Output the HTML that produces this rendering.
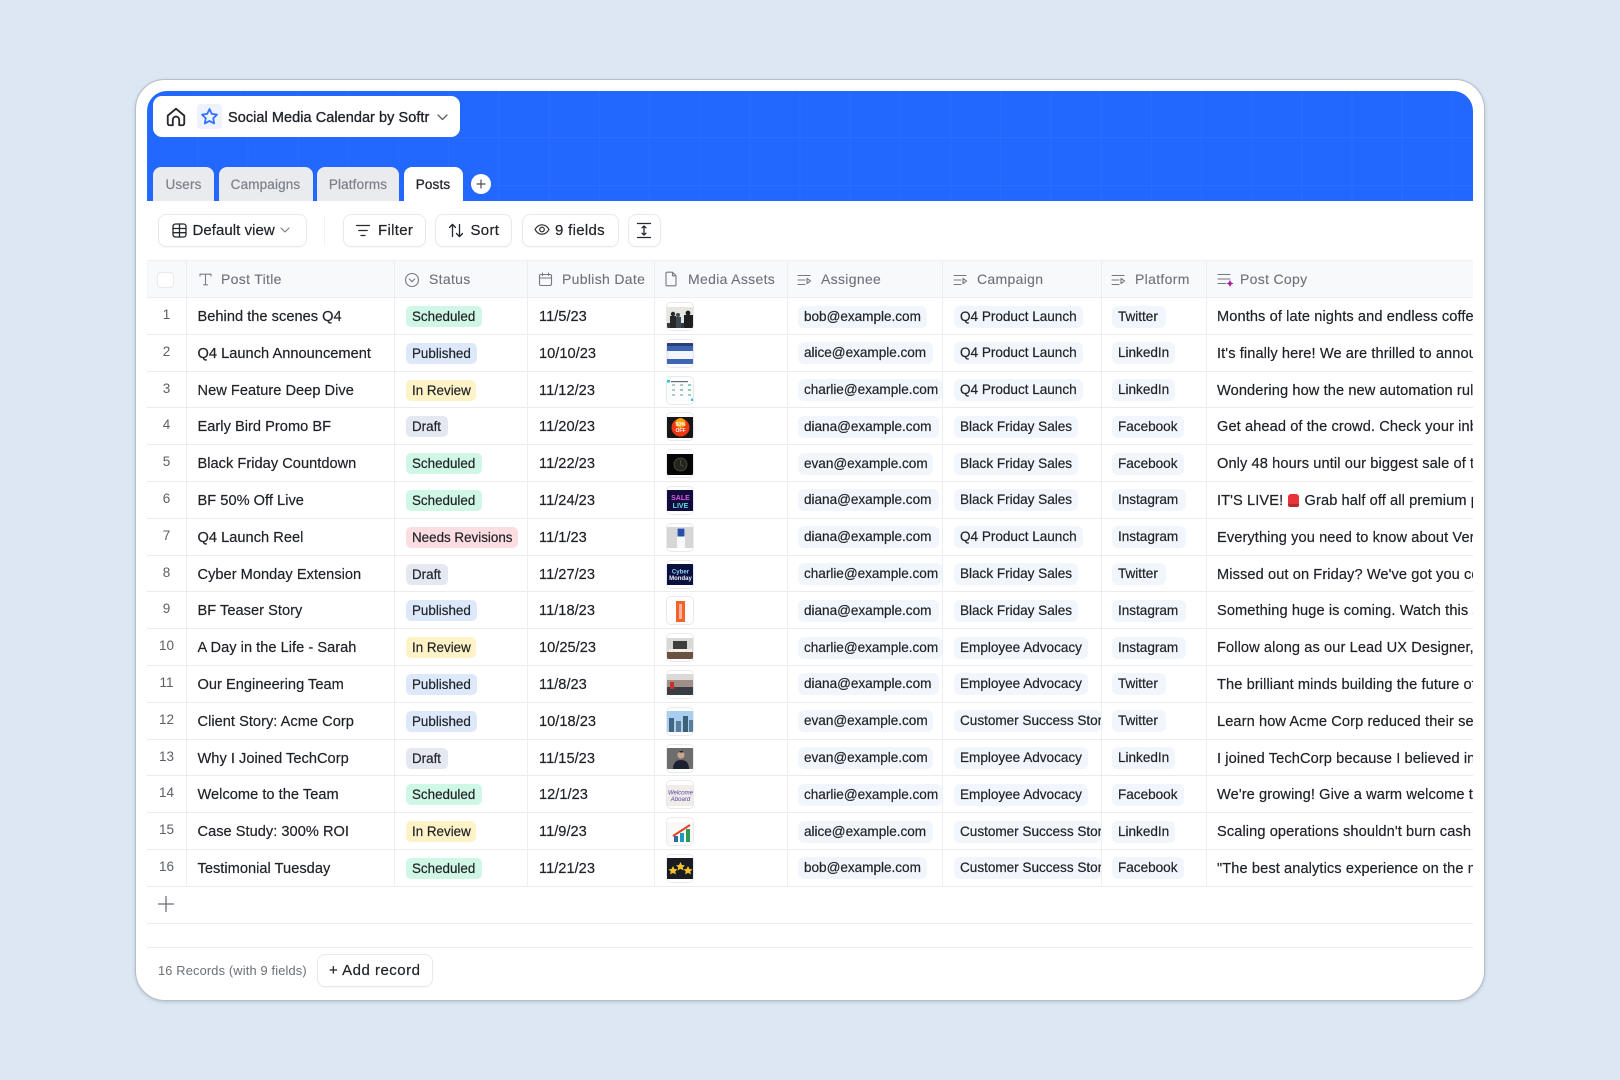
<!DOCTYPE html>
<html lang="en"><head><meta charset="utf-8"><title>Social Media Calendar by Softr</title>
<style>
*{box-sizing:border-box;margin:0;padding:0}
html,body{width:1620px;height:1080px;overflow:hidden;background:#dce7f3;font-family:"Liberation Sans",sans-serif;color:#1f2227;-webkit-text-stroke:.2px}
.card{position:absolute;left:135px;top:79px;width:1350px;height:922px;background:#fff;border:1px solid #b9bfc7;border-radius:30px;box-shadow:0 1px 3px rgba(60,80,110,.25)}
.blue{position:absolute;left:147px;top:91px;width:1326px;height:110px;border-radius:20px 20px 0 0;background-color:#2268ff;background-image:linear-gradient(90deg,rgba(255,255,255,.03) 1px,transparent 1px),linear-gradient(180deg,rgba(255,255,255,.03) 1px,transparent 1px);background-size:50.2px 48px;background-position:0 46px}
.pillhead{position:absolute;left:153px;top:96px;width:307px;height:41px;background:#fff;border-radius:9px}
.title{position:absolute;left:228px;top:109px;font-size:14.5px;line-height:18px;letter-spacing:.05px;white-space:nowrap;-webkit-text-stroke:.35px}
.starbox{position:absolute;left:197px;top:104px;width:25px;height:25px;background:#edf2fe;border-radius:4px}
.tab{position:absolute;top:167px;height:34px;background:#e9ebef;border-radius:8px 8px 0 0;color:#7c8088;font-size:13.5px;line-height:36px;text-align:center;letter-spacing:.15px}
.tab.on{background:#fff;color:#25282d;-webkit-text-stroke:.3px}
.plus{position:absolute;left:471px;top:174px;width:20px;height:20px;background:#fff;border-radius:50%}
.btn{position:absolute;top:214px;height:33px;background:#fff;border:1px solid #e7e9ed;border-radius:8px;box-shadow:0 1px 1px rgba(30,40,60,.04)}
.tt{position:absolute;font-size:15px;line-height:20px;white-space:nowrap;letter-spacing:.3px}
.head{position:absolute;left:147px;top:260px;width:1326px;height:38px;background:#f8f9fb;border-top:1px solid #eff0f2;border-bottom:1px solid #edeef1}
.h{position:absolute;top:270px;font-size:14px;line-height:18px;color:#6c7078;white-space:nowrap;letter-spacing:.32px;-webkit-text-stroke:.1px}
.vl{position:absolute;top:260px;height:627px;width:1px;background:#eceef1}
.check{position:absolute;left:157px;top:272px;width:17px;height:16px;border:1px solid #e6e8eb;border-radius:4px;background:#fff}
.rows{position:absolute;left:147px;top:298px;width:1326px}
.r{position:relative;height:36.8px;border-bottom:1px solid #e9ebee;font-size:14.6px;line-height:38px;white-space:nowrap;letter-spacing:.03px}
.r>*{position:absolute;top:0}
.n{left:0;width:39px;text-align:center;color:#5b5f66;font-size:13.5px;top:-1px!important;line-height:36px;-webkit-text-stroke:0;letter-spacing:0}
.t{left:50.500px}.d{left:392px}
.x{left:1070px;width:256px;overflow:hidden;letter-spacing:.1px}
.s{left:259px;top:8px!important;height:21px;line-height:21px;border-radius:5px;padding-left:6px;font-size:13.4px;letter-spacing:0}
.sch{background:#d0f7e6;width:76px}.pub{background:#dde9fa;width:71px}.rev{background:#fdf3c7;width:70px}.dra{background:#e4e8f1;width:42px}.nee{background:#fcdde1;width:112px}
.chip{top:7.500px!important;height:22px;line-height:22px;background:#f1f5fc;border-radius:6px;padding-left:6px;overflow:hidden;font-size:13.6px;letter-spacing:-.03px}
.a{left:651px}.c{left:807px}.p{left:965px}
.th{left:518.7px;top:4px!important;width:28.5px;height:29px;border:1px solid #e8e9ec;border-radius:5px;background:#fff;overflow:hidden}
.th svg{position:absolute;left:.5px;top:3.5px;width:27px;height:21px;display:block;filter:blur(.35px)}
.siren{display:inline-block;width:11px;height:13px;background:#e8333a;border-radius:3px 3px 2px 2px;vertical-align:-2px;margin:0 1px;border-bottom:3px solid #b9282d}
.hl{position:absolute;left:147px;width:1326px;height:1px;background:#e9ebee}
.foot{position:absolute;left:158px;top:962px;font-size:12.8px;line-height:18px;color:#70747b;letter-spacing:.17px;-webkit-text-stroke:.05px;white-space:nowrap}
svg.i{position:absolute;fill:none;stroke-linecap:round;stroke-linejoin:round}
</style></head><body>
<div class="card"></div>
<div class="blue"></div>
<div class="pillhead"></div>
<svg class="i" style="left:165px;top:106px" width="22" height="22" viewBox="0 0 24 24" stroke="#25282d" stroke-width="2"><path d="M3 10.500 12 3l9 7.500V19a2 2 0 0 1-2 2h-3.500v-6a3.500 3.500 0 0 0-7 0v6H5a2 2 0 0 1-2-2z"/></svg>
<div class="starbox"></div>
<svg class="i" style="left:200px;top:107px" width="19" height="19" viewBox="0 0 24 24" stroke="#2f6fff" stroke-width="2.200"><path d="M12 2.500l2.900 6.200 6.600.9-4.800 4.600 1.200 6.600L12 17.600 6.100 20.800l1.200-6.600L2.500 9.600l6.600-.9z"/></svg>
<div class="title">Social Media Calendar by Softr</div>
<svg class="i" style="left:436px;top:111px" width="13" height="12" viewBox="0 0 13 12" stroke="#5c6068" stroke-width="1.300"><path d="M2 4l4.500 4.500L11 4"/></svg>

<div class="tab" style="left:153px;width:61px">Users</div>
<div class="tab" style="left:218.500px;width:94px">Campaigns</div>
<div class="tab" style="left:317px;width:82px">Platforms</div>
<div class="tab on" style="left:403.500px;width:59px">Posts</div>
<div class="plus"></div>
<svg class="i" style="left:476px;top:179px" width="10" height="10" viewBox="0 0 10 10" stroke="#4a4e55" stroke-width="1.200"><path d="M5 1v8M1 5h8"/></svg>

<div class="btn" style="left:158px;width:149px"></div>
<svg class="i" style="left:172px;top:223px" width="15" height="15" viewBox="0 0 15 15" stroke="#25282d" stroke-width="1.300"><rect x="1" y="1" width="13" height="13" rx="2.500"/><path d="M1 5.500h13M1 9.700h13M7.500 1v13"/></svg>
<div class="tt" style="left:192.500px;top:221px;letter-spacing:.05px">Default view</div>
<svg class="i" style="left:279px;top:224px" width="12" height="12" viewBox="0 0 12 12" stroke="#777b82" stroke-width="1.100"><path d="M2 4l4 4 4-4"/></svg>
<div style="position:absolute;left:324px;top:216px;width:1px;height:29px;background:#f0f1f3"></div>

<div class="btn" style="left:342.500px;width:83px"></div>
<svg class="i" style="left:355px;top:223px" width="16" height="15" viewBox="0 0 16 15" stroke="#25282d" stroke-width="1.300"><path d="M1.500 2.500h13M3.800 7.500h8.400M6 12.500h4"/></svg>
<div class="tt" style="left:378px;top:221px">Filter</div>

<div class="btn" style="left:435px;width:77px"></div>
<svg class="i" style="left:448px;top:222px" width="16" height="17" viewBox="0 0 16 17" stroke="#25282d" stroke-width="1.300"><path d="M4.500 14.500v-12M1.500 5.500l3-3.200 3 3.200M11.500 2.500v12M8.500 11.500l3 3.200 3-3.200"/></svg>
<div class="tt" style="left:470.500px;top:221px">Sort</div>

<div class="btn" style="left:521.500px;width:97px"></div>
<svg class="i" style="left:534px;top:222px" width="16" height="15" viewBox="0 0 16 15" stroke="#25282d" stroke-width="1.200"><path d="M1 7.500C2.800 4.300 5.200 2.800 8 2.800s5.200 1.500 7 4.700c-1.800 3.200-4.200 4.700-7 4.700S2.800 10.700 1 7.500z"/><circle cx="8" cy="7.500" r="2.300"/></svg>
<div class="tt" style="left:555px;top:221px">9 fields</div>

<div class="btn" style="left:628px;width:32.500px"></div>
<svg class="i" style="left:636px;top:222px" width="16" height="17" viewBox="0 0 16 17" stroke="#25282d" stroke-width="1.300"><path d="M1.500 1.500h13M1.500 15.500h13M8 4v9M6 5.800L8 4l2 1.800M6 11.200L8 13l2-1.800"/></svg>

<div class="head"></div>
<div class="check"></div>
<svg class="i" style="left:198px;top:272px" width="15" height="15" viewBox="0 0 15 15" stroke="#7a7e85" stroke-width="1.100"><path d="M2 4V2.200h11V4M7.500 2.200v10.600M5.500 12.800h4"/></svg>
<div class="h" style="left:221px">Post Title</div>
<svg class="i" style="left:404px;top:272px" width="16" height="16" viewBox="0 0 16 16" stroke="#74787f" stroke-width="1.100"><circle cx="8" cy="8" r="6.500"/><path d="M5.300 7l2.700 2.700L10.700 7"/></svg>
<div class="h" style="left:429px">Status</div>
<svg class="i" style="left:538px;top:272px" width="15" height="15" viewBox="0 0 15 15" stroke="#74787f" stroke-width="1.100"><rect x="1.500" y="2.500" width="12" height="11" rx="1.500"/><path d="M1.500 6h12M4.500 1v2.500M10.500 1v2.500"/></svg>
<div class="h" style="left:562px">Publish Date</div>
<svg class="i" style="left:664px;top:271px" width="14" height="16" viewBox="0 0 14 16" stroke="#74787f" stroke-width="1.100"><path d="M2 2.200A1 1 0 0 1 3 1.200h5.500L12 4.800V13.800a1 1 0 0 1-1 1H3a1 1 0 0 1-1-1zM8.500 1.200v3.600H12"/></svg>
<div class="h" style="left:688px">Media Assets</div>
<svg class="i" style="left:797px;top:274px" width="15" height="12" viewBox="0 0 15 12" stroke="#74787f" stroke-width="1.100"><path d="M1 1.500h12M1 6h7M1 10.500h7M10 4.500v5l3.500-2.500z"/></svg>
<div class="h" style="left:821px">Assignee</div>
<svg class="i" style="left:953px;top:274px" width="15" height="12" viewBox="0 0 15 12" stroke="#74787f" stroke-width="1.100"><path d="M1 1.500h12M1 6h7M1 10.500h7M10 4.500v5l3.500-2.500z"/></svg>
<div class="h" style="left:977px">Campaign</div>
<svg class="i" style="left:1111px;top:274px" width="15" height="12" viewBox="0 0 15 12" stroke="#74787f" stroke-width="1.100"><path d="M1 1.500h12M1 6h7M1 10.500h7M10 4.500v5l3.500-2.500z"/></svg>
<div class="h" style="left:1135px">Platform</div>
<svg class="i" style="left:1217px;top:273px" width="17" height="14" viewBox="0 0 17 14" stroke="#74787f" stroke-width="1.100"><path d="M1 1.500h12M1 6h12M1 10.500h8"/><path d="M13 7.500l1 2 2 1-2 1-1 2-1-2-2-1 2-1z" fill="#a3239e" stroke="#a3239e" stroke-width=".5"/></svg>
<div class="h" style="left:1240px">Post Copy</div>

<div class="rows">
<div class="r"><span class="n">1</span><span class="t">Behind the scenes Q4</span><span class="s sch">Scheduled</span><span class="d">11/5/23</span>
<span class="th"><svg viewBox="0 0 27 21"><rect width="27" height="21" fill="#e6e6e1"/><rect y="16" width="27" height="5" fill="#37393a"/><circle cx="6" cy="7" r="2.200" fill="#26282a"/><rect x="3" y="9" width="6" height="12" fill="#26282a"/><circle cx="11" cy="8" r="2" fill="#3a4a50"/><rect x="9" y="10" width="5" height="11" fill="#3a4a50"/><circle cx="21" cy="6" r="2.400" fill="#1e1f20"/><rect x="17" y="8" width="9" height="13" fill="#1e1f20"/></svg></span>
<span class="chip a" style="width:129px">bob@example.com</span><span class="chip c" style="width:129px">Q4 Product Launch</span><span class="chip p" style="width:54px">Twitter</span><span class="x">Months of late nights and endless coffee have led to this</span></div>
<div class="r"><span class="n">2</span><span class="t">Q4 Launch Announcement</span><span class="s pub">Published</span><span class="d">10/10/23</span>
<span class="th"><svg viewBox="0 0 27 21"><rect width="27" height="21" fill="#e9eef8"/><rect width="27" height="3" fill="#2a3f78"/><rect y="3" width="27" height="5" fill="#3f66b4"/><rect x="2" y="8" width="23" height="8" fill="#f3f6fc"/><rect y="16" width="27" height="5" fill="#3f66b4"/></svg></span>
<span class="chip a" style="width:135px">alice@example.com</span><span class="chip c" style="width:129px">Q4 Product Launch</span><span class="chip p" style="width:63px">LinkedIn</span><span class="x">It's finally here! We are thrilled to announce our newest release</span></div>
<div class="r"><span class="n">3</span><span class="t">New Feature Deep Dive</span><span class="s rev">In Review</span><span class="d">11/12/23</span>
<span class="th"><svg viewBox="0 0 27 21"><rect width="27" height="21" fill="#fbfcfc"/><rect width="3" height="2.500" fill="#25c5d6"/><rect x="24" y="18.500" width="3" height="2.500" fill="#25c5d6"/><rect x="4" y="1" width="17" height="1.200" fill="#64707c"/><g fill="#b6c6cc"><rect x="5" y="4" width="3" height="2"/><rect x="13" y="4" width="3" height="2"/><rect x="21" y="4" width="3" height="2" fill="#8fd0bd"/><rect x="5" y="9" width="3" height="2"/><rect x="13" y="9" width="3" height="2" fill="#8fd0bd"/><rect x="21" y="9" width="3" height="2" fill="#8fd0bd"/><rect x="5" y="14" width="3" height="2"/><rect x="13" y="14" width="3" height="2"/><rect x="21" y="14" width="3" height="2"/></g></svg></span>
<span class="chip a" style="width:144px">charlie@example.com</span><span class="chip c" style="width:129px">Q4 Product Launch</span><span class="chip p" style="width:63px">LinkedIn</span><span class="x">Wondering how the new automation rules work in practice</span></div>
<div class="r"><span class="n">4</span><span class="t">Early Bird Promo BF</span><span class="s dra">Draft</span><span class="d">11/20/23</span>
<span class="th"><svg viewBox="0 0 27 21"><rect width="27" height="21" fill="#17171a"/><circle cx="13.500" cy="10.500" r="9" fill="#f2360f"/><circle cx="13.500" cy="6" r="5" fill="#f7a50e"/><text x="13.500" y="9" font-size="5" font-weight="700" fill="#fff" text-anchor="middle" stroke="none">50%</text><text x="13.500" y="15" font-size="5" font-weight="700" fill="#fff" text-anchor="middle" stroke="none">OFF</text></svg></span>
<span class="chip a" style="width:141px">diana@example.com</span><span class="chip c" style="width:124px">Black Friday Sales</span><span class="chip p" style="width:72px">Facebook</span><span class="x">Get ahead of the crowd. Check your inbox for early access</span></div>
<div class="r"><span class="n">5</span><span class="t">Black Friday Countdown</span><span class="s sch">Scheduled</span><span class="d">11/22/23</span>
<span class="th"><svg viewBox="0 0 27 21"><rect width="27" height="21" fill="#060606"/><circle cx="13.500" cy="10.500" r="6.500" fill="#232320" stroke="#57533f" stroke-width=".8"/><path d="M13.500 6v4.500l3 2" stroke="#6a6650" stroke-width=".6" fill="none"/></svg></span>
<span class="chip a" style="width:135px">evan@example.com</span><span class="chip c" style="width:124px">Black Friday Sales</span><span class="chip p" style="width:72px">Facebook</span><span class="x">Only 48 hours until our biggest sale of the year begins</span></div>
<div class="r"><span class="n">6</span><span class="t">BF 50% Off Live</span><span class="s sch">Scheduled</span><span class="d">11/24/23</span>
<span class="th"><svg viewBox="0 0 27 21"><rect width="27" height="21" fill="#120c3e"/><text x="13.500" y="10" font-size="7" font-weight="700" fill="#d85ce0" text-anchor="middle" stroke="none">SALE</text><text x="13.500" y="18" font-size="7" font-weight="700" fill="#5fe0e8" text-anchor="middle" stroke="none">LIVE</text></svg></span>
<span class="chip a" style="width:141px">diana@example.com</span><span class="chip c" style="width:124px">Black Friday Sales</span><span class="chip p" style="width:74px">Instagram</span><span class="x">IT'S LIVE! <i class="siren"></i> Grab half off all premium plans today only</span></div>
<div class="r"><span class="n">7</span><span class="t">Q4 Launch Reel</span><span class="s nee">Needs Revisions</span><span class="d">11/1/23</span>
<span class="th"><svg viewBox="0 0 27 21"><rect width="27" height="21" fill="#d6d6d6"/><rect x="10" y="1" width="8" height="20" rx="1" fill="#f8f9fa"/><rect x="10.500" y="1.500" width="7" height="8" fill="#2a4fa8"/></svg></span>
<span class="chip a" style="width:141px">diana@example.com</span><span class="chip c" style="width:129px">Q4 Product Launch</span><span class="chip p" style="width:74px">Instagram</span><span class="x">Everything you need to know about Version 4 in a single reel</span></div>
<div class="r"><span class="n">8</span><span class="t">Cyber Monday Extension</span><span class="s dra">Draft</span><span class="d">11/27/23</span>
<span class="th"><svg viewBox="0 0 27 21"><rect width="27" height="21" fill="#0a1040"/><text x="13.500" y="9.500" font-size="6" font-weight="700" fill="#8fd4f5" text-anchor="middle" stroke="none">Cyber</text><text x="13.500" y="16" font-size="6" font-weight="700" fill="#e9edf8" text-anchor="middle" stroke="none">Monday</text></svg></span>
<span class="chip a" style="width:144px">charlie@example.com</span><span class="chip c" style="width:124px">Black Friday Sales</span><span class="chip p" style="width:54px">Twitter</span><span class="x">Missed out on Friday? We've got you covered this Monday</span></div>
<div class="r"><span class="n">9</span><span class="t">BF Teaser Story</span><span class="s pub">Published</span><span class="d">11/18/23</span>
<span class="th"><svg viewBox="0 0 27 21"><rect width="27" height="21" fill="#fff"/><rect x="9" y="0" width="9" height="21" fill="#f2642c"/><rect x="12" y="3" width="3" height="15" fill="#f9b59b"/></svg></span>
<span class="chip a" style="width:141px">diana@example.com</span><span class="chip c" style="width:124px">Black Friday Sales</span><span class="chip p" style="width:74px">Instagram</span><span class="x">Something huge is coming. Watch this space for more news</span></div>
<div class="r"><span class="n">10</span><span class="t">A Day in the Life - Sarah</span><span class="s rev">In Review</span><span class="d">10/25/23</span>
<span class="th"><svg viewBox="0 0 27 21"><rect width="27" height="21" fill="#d9d8d2"/><rect x="6" y="3" width="14" height="8" fill="#3d3d3e"/><rect y="14" width="27" height="7" fill="#6a5140"/><rect x="2" y="11" width="23" height="3" fill="#efeee9"/></svg></span>
<span class="chip a" style="width:144px">charlie@example.com</span><span class="chip c" style="width:134px">Employee Advocacy</span><span class="chip p" style="width:74px">Instagram</span><span class="x">Follow along as our Lead UX Designer, Sarah, shares her day</span></div>
<div class="r"><span class="n">11</span><span class="t">Our Engineering Team</span><span class="s pub">Published</span><span class="d">11/8/23</span>
<span class="th"><svg viewBox="0 0 27 21"><rect width="27" height="21" fill="#dcdad6"/><rect y="6" width="27" height="8" fill="#9f8f88"/><rect y="13" width="27" height="8" fill="#393d44"/><rect x="3" y="8" width="4" height="7" fill="#c9302c"/></svg></span>
<span class="chip a" style="width:141px">diana@example.com</span><span class="chip c" style="width:134px">Employee Advocacy</span><span class="chip p" style="width:54px">Twitter</span><span class="x">The brilliant minds building the future of our platform</span></div>
<div class="r"><span class="n">12</span><span class="t">Client Story: Acme Corp</span><span class="s pub">Published</span><span class="d">10/18/23</span>
<span class="th"><svg viewBox="0 0 27 21"><rect width="27" height="21" fill="#a9cff0"/><rect x="2" y="7" width="5" height="14" fill="#43657f"/><rect x="9" y="10" width="5" height="11" fill="#5a7e98"/><rect x="16" y="5" width="5" height="16" fill="#3d6078"/><rect x="22" y="9" width="5" height="12" fill="#5a7e98"/></svg></span>
<span class="chip a" style="width:135px">evan@example.com</span><span class="chip c" style="width:147px">Customer Success Story</span><span class="chip p" style="width:54px">Twitter</span><span class="x">Learn how Acme Corp reduced their server costs by half</span></div>
<div class="r"><span class="n">13</span><span class="t">Why I Joined TechCorp</span><span class="s dra">Draft</span><span class="d">11/15/23</span>
<span class="th"><svg viewBox="0 0 27 21"><rect width="27" height="21" fill="#6d6d6d"/><circle cx="14" cy="7" r="3.600" fill="#c9a58e"/><rect x="12.500" y="3" width="3.500" height="1.500" fill="#2e2320"/><path d="M6 21c0-6 3-9 8-9s8 3 8 9z" fill="#1d2233"/></svg></span>
<span class="chip a" style="width:135px">evan@example.com</span><span class="chip c" style="width:134px">Employee Advocacy</span><span class="chip p" style="width:63px">LinkedIn</span><span class="x">I joined TechCorp because I believed in the mission here</span></div>
<div class="r"><span class="n">14</span><span class="t">Welcome to the Team</span><span class="s sch">Scheduled</span><span class="d">12/1/23</span>
<span class="th"><svg viewBox="0 0 27 21"><rect width="27" height="21" fill="#f0ede9"/><text x="13.500" y="9.500" font-size="6" font-style="italic" fill="#5b3fa8" text-anchor="middle" stroke="none">Welcome</text><text x="13.500" y="16" font-size="6" font-style="italic" fill="#5b3fa8" text-anchor="middle" stroke="none">Aboard</text></svg></span>
<span class="chip a" style="width:144px">charlie@example.com</span><span class="chip c" style="width:134px">Employee Advocacy</span><span class="chip p" style="width:72px">Facebook</span><span class="x">We're growing! Give a warm welcome to our newest members</span></div>
<div class="r"><span class="n">15</span><span class="t">Case Study: 300% ROI</span><span class="s rev">In Review</span><span class="d">11/9/23</span>
<span class="th"><svg viewBox="0 0 27 21"><rect width="27" height="21" fill="#f8f8f8"/><rect x="7" y="14" width="4" height="6" fill="#2e6a9e"/><rect x="13" y="11" width="4" height="9" fill="#1c9bb8"/><rect x="19" y="7" width="4" height="13" fill="#2f9a56"/><path d="M6 14L23 3" stroke="#e2431e" stroke-width="2" fill="none"/></svg></span>
<span class="chip a" style="width:135px">alice@example.com</span><span class="chip c" style="width:147px">Customer Success Story</span><span class="chip p" style="width:63px">LinkedIn</span><span class="x">Scaling operations shouldn't burn cash</span></div>
<div class="r"><span class="n">16</span><span class="t">Testimonial Tuesday</span><span class="s sch">Scheduled</span><span class="d">11/21/23</span>
<span class="th"><svg viewBox="0 0 27 21"><rect width="27" height="21" fill="#1a1c24"/><g fill="#f5c12a"><path d="M6 8l1.500 3 3 .4-2.200 2 .6 3-2.900-1.500-2.900 1.500.6-3-2.200-2 3-.4z"/><path d="M13.500 4l1.500 3 3 .4-2.200 2 .6 3-2.900-1.500-2.900 1.500.6-3-2.200-2 3-.4z"/><path d="M21 8l1.500 3 3 .4-2.200 2 .6 3-2.900-1.500-2.900 1.500.6-3-2.200-2 3-.4z"/></g></svg></span>
<span class="chip a" style="width:129px">bob@example.com</span><span class="chip c" style="width:147px">Customer Success Story</span><span class="chip p" style="width:72px">Facebook</span><span class="x">"The best analytics experience on the market," says one client</span></div>
</div>

<div class="vl" style="left:186px"></div><div class="vl" style="left:394px"></div><div class="vl" style="left:527px"></div><div class="vl" style="left:654px"></div><div class="vl" style="left:786.500px"></div><div class="vl" style="left:942px"></div><div class="vl" style="left:1100.500px"></div><div class="vl" style="left:1206px"></div>

<svg class="i" style="left:157px;top:895px" width="18" height="18" viewBox="0 0 18 18" stroke="#6a6e75" stroke-width="1.300"><path d="M9 1.500v15M1.500 9h15"/></svg>
<div class="hl" style="top:923px"></div>
<div class="hl" style="top:947px"></div>
<div class="foot">16 Records (with 9 fields)</div>
<div class="btn" style="left:316.500px;top:954px;width:116px;height:33px"></div>
<div class="tt" style="left:329px;top:961px;letter-spacing:.5px">+ Add record</div>
</body></html>
